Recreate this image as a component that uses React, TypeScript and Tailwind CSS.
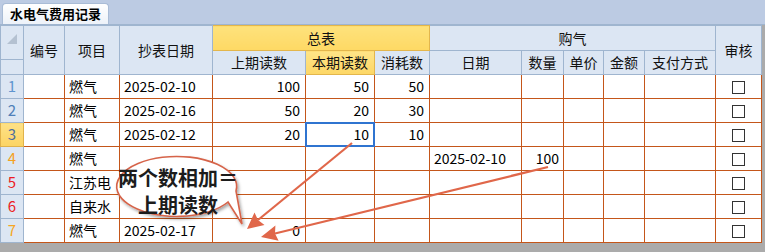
import React from 'react';

type Row = {
  n: number;
  item: string;
  date?: string;
  prev?: string;
  cur?: string;
  used?: string;
  buyDate?: string;
  qty?: string;
};

const rows: Row[] = [
  { n: 1, item: '燃气', date: '2025-02-10', prev: '100', cur: '50', used: '50' },
  { n: 2, item: '燃气', date: '2025-02-16', prev: '50', cur: '20', used: '30' },
  { n: 3, item: '燃气', date: '2025-02-12', prev: '20', cur: '10', used: '10' },
  { n: 4, item: '燃气', buyDate: '2025-02-10', qty: '100' },
  { n: 5, item: '江苏电' },
  { n: 6, item: '自来水' },
  { n: 7, item: '燃气', date: '2025-02-17', prev: '0' },
];

// row header digit colours
const numColor: Record<number, string> = {
  1: 'text-[#5f95cf]',
  2: 'text-[#4f7fb8]',
  3: 'text-[#4f6f9c]',
  4: 'text-[#f4a11f]',
  5: 'text-[#ec1c24]',
  6: 'text-[#ec1c24]',
  7: 'text-[#f6a623]',
};

const hd = 'border border-[#9fb5cf] bg-[#dce6f3] font-normal text-[14px] text-[#111] p-0';
const td = 'border border-[#c4561a] bg-white text-[14px] text-[#000] p-0 px-1 whitespace-nowrap';

export default function App() {
  return (
    <div className="relative w-[765px] h-[252px] overflow-hidden bg-[#ababab] font-['Noto_Sans_CJK_SC','Microsoft_YaHei',sans-serif]">
      {/* Sheet tabs */}
      <div className="h-[25px] bg-[#bccbe3] border-b border-[#9fb5cf] flex items-end pl-[2px]">
        <div className="h-[21px] px-[7px] rounded-t-[4px] bg-gradient-to-b from-white to-[#edf2f9] border border-b-0 border-[#a9bcd6] text-[13px] font-bold leading-[20px] text-black">
          水电气费用记录
        </div>
      </div>

      <table className="table-fixed border-collapse w-[761px] bg-white">
        <colgroup>
          <col className="w-[23px]" />
          <col className="w-[41px]" />
          <col className="w-[55px]" />
          <col className="w-[93px]" />
          <col className="w-[93px]" />
          <col className="w-[69px]" />
          <col className="w-[55px]" />
          <col className="w-[92px]" />
          <col className="w-[42px]" />
          <col className="w-[40px]" />
          <col className="w-[41px]" />
          <col className="w-[71px]" />
          <col className="w-[46px]" />
        </colgroup>
        <thead>
          <tr className="h-[25px]">
            <th rowSpan={2} className={`${hd} align-top`}>
              <div className="h-[34px] border-b border-[#9fb5cf] relative">
                <div className="absolute right-[6px] top-[8px] w-0 h-0 border-l-[10px] border-l-transparent border-b-[10px] border-b-[#b4c1d1]" />
              </div>
            </th>
            <th rowSpan={2} className={hd}>编号</th>
            <th rowSpan={2} className={hd}>项目</th>
            <th rowSpan={2} className={hd}>抄表日期</th>
            <th colSpan={3} className={`${hd} bg-gradient-to-b from-[#fee27c] to-[#fed964] border-[#e3b64c]`}>总表</th>
            <th colSpan={5} className={hd}>购气</th>
            <th rowSpan={2} className={hd}>审核</th>
          </tr>
          <tr className="h-[24px]">
            <th className={hd}>上期读数</th>
            <th className={`${hd} bg-gradient-to-b from-[#fee487] to-[#fdd766] border-[#e3b64c]`}>本期读数</th>
            <th className={hd}>消耗数</th>
            <th className={hd}>日期</th>
            <th className={hd}>数量</th>
            <th className={hd}>单价</th>
            <th className={hd}>金额</th>
            <th className={hd}>支付方式</th>
          </tr>
        </thead>
        <tbody>
          {rows.map((r) => (
            <tr key={r.n} className="h-[24px]">
              <td
                className={`border border-[#9fb5cf] text-center text-[15px] p-0 ${
                  r.n === 3 ? 'bg-gradient-to-b from-[#fee186] to-[#fcd462] border-[#e0b24a]' : 'bg-[#dce6f3]'
                } ${numColor[r.n]}`}
              >
                {r.n}
              </td>
              <td className={td}></td>
              <td className={td}>{r.item}</td>
              <td className={td}>{r.date}</td>
              <td className={`${td} text-right pr-[5px]`}>{r.prev}</td>
              <td className={`${td} text-right pr-[5px] ${r.n === 3 ? 'relative' : ''}`}>
                {r.cur}
                {r.n === 3 && <span className="absolute -inset-px border-2 border-[#2f74d0]" />}
              </td>
              <td className={`${td} text-right pr-[5px]`}>{r.used}</td>
              <td className={td}>{r.buyDate}</td>
              <td className={`${td} text-right pr-[4px]`}>{r.qty}</td>
              <td className={td}></td>
              <td className={td}></td>
              <td className={td}></td>
              <td className={`${td} text-center`}>
                <span className="inline-block w-[13px] h-[13px] border border-[#333] align-middle mb-[2px]" />
              </td>
            </tr>
          ))}
        </tbody>
      </table>

      {/* Annotation: callout bubble and arrows */}
      <svg className="absolute left-0 top-0 pointer-events-none" width="765" height="252" viewBox="0 0 765 252">
        <defs>
          <filter id="sh" x="-20%" y="-20%" width="140%" height="150%">
            <feDropShadow dx="1.5" dy="2" stdDeviation="1.5" floodColor="#000" floodOpacity="0.35" />
          </filter>
        </defs>
        <path
          d="M 236 191 L 242 224 L 228 202 A 60 30 0 1 1 236 191 Z"
          fill="#fff"
          stroke="#d6644a"
          strokeWidth="1.6"
          filter="url(#sh)"
        />
        <g stroke="#e0674a" strokeWidth="2.2" fill="#e0674a">
          <line x1="352" y1="143" x2="258" y2="220" />
          <polygon points="247,229 264.5,225 258,220 254.5,212.5" stroke="none" />
          <line x1="548" y1="167" x2="275" y2="233.5" />
          <polygon points="261,237 278.6,240.7 275,233.5 275.4,225.5" stroke="none" />
        </g>
      </svg>
      <div className="absolute left-[117px] top-[164px] w-[122px] text-center text-[20px] leading-[27px] font-bold text-[#1c1c1c] whitespace-nowrap">
        <div>两个数相加＝</div>
        <div>上期读数</div>
      </div>
    </div>
  );
}
